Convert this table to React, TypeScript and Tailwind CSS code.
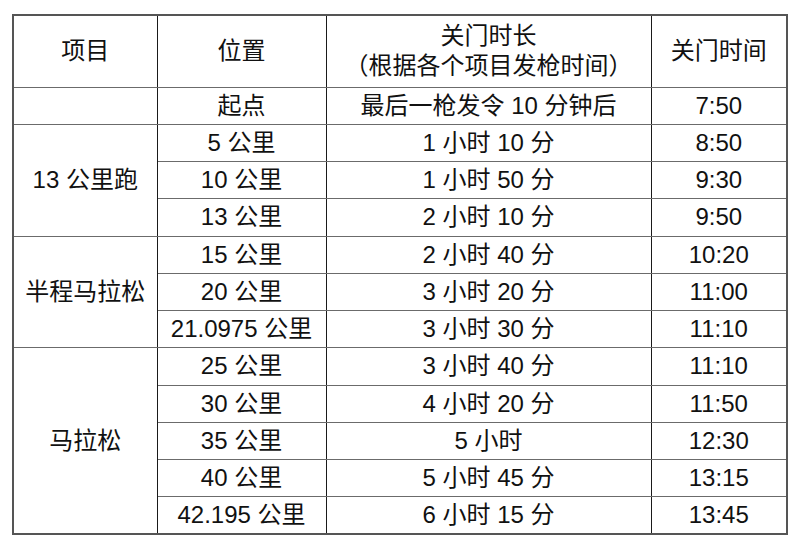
const rows: { group?: string; span?: number; pos: string; dur: string; time: string; noGroup?: boolean }[] = [
  { pos: "起点", dur: "最后一枪发令 10 分钟后", time: "7:50", group: "", span: 1 },
  { pos: "5 公里", dur: "1 小时 10 分", time: "8:50", group: "13 公里跑", span: 3 },
  { pos: "10 公里", dur: "1 小时 50 分", time: "9:30", noGroup: true },
  { pos: "13 公里", dur: "2 小时 10 分", time: "9:50", noGroup: true },
  { pos: "15 公里", dur: "2 小时 40 分", time: "10:20", group: "半程马拉松", span: 3 },
  { pos: "20 公里", dur: "3 小时 20 分", time: "11:00", noGroup: true },
  { pos: "21.0975 公里", dur: "3 小时 30 分", time: "11:10", noGroup: true },
  { pos: "25 公里", dur: "3 小时 40 分", time: "11:10", group: "马拉松", span: 5 },
  { pos: "30 公里", dur: "4 小时 20 分", time: "11:50", noGroup: true },
  { pos: "35 公里", dur: "5 小时", time: "12:30", noGroup: true },
  { pos: "40 公里", dur: "5 小时 45 分", time: "13:15", noGroup: true },
  { pos: "42.195 公里", dur: "6 小时 15 分", time: "13:45", noGroup: true },
];

const cell = "border-x border-x-[#1a1a1a] border-y border-y-[#6b6b6b] text-center align-middle p-0 whitespace-nowrap";

export default function App() {
  return (
    <div
      className="w-[800px] h-[548px] bg-white pt-[14px] pl-[12px] text-[24px] leading-[30px] text-[#111]"
      style={{ fontFamily: '"Liberation Sans", "Noto Sans CJK SC", sans-serif' }}
    >
      <table className="table-fixed border-collapse border-2 border-[#555] w-[774px]">
        <colgroup>
          <col className="w-[144px]" />
          <col className="w-[169px]" />
          <col className="w-[325px]" />
          <col className="w-[136px]" />
        </colgroup>
        <thead>
          <tr className="h-[72px]">
            <th className={`${cell} font-normal`}>项目</th>
            <th className={`${cell} font-normal`}>位置</th>
            <th className={`${cell} font-normal`}>
              <div>关门时长</div>
              <div>（根据各个项目发枪时间）</div>
            </th>
            <th className={`${cell} font-normal`}>关门时间</th>
          </tr>
        </thead>
        <tbody>
          {rows.map((r, i) => (
            <tr key={i} className="h-[37.25px]">
              {!r.noGroup && (
                <td className={cell} rowSpan={r.span}>
                  {r.group}
                </td>
              )}
              <td className={cell}>{r.pos}</td>
              <td className={cell}>{r.dur}</td>
              <td className={cell}>{r.time}</td>
            </tr>
          ))}
        </tbody>
      </table>
    </div>
  );
}
